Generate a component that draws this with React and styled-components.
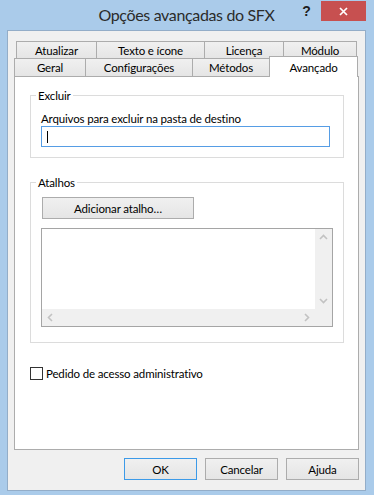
import React from 'react';
import styled, { createGlobalStyle } from 'styled-components';

const GlobalStyle = createGlobalStyle`
  html, body { margin: 0; padding: 0; }
  body {
    font-family: Lato, "Liberation Sans", sans-serif;
    font-size: 11.5px;
    letter-spacing: -0.15px;
    color: #000;
    background: #aacbea;
  }
  * { box-sizing: border-box; }
`;

const Window = styled.div`
  width: 374px;
  height: 495px;
  display: flex;
  flex-direction: column;
  padding: 0 8px 4px 7px;
  background: #aacbea;
`;

const TitleBar = styled.div`
  height: 30px;
  flex-shrink: 0;
  display: grid;
  grid-template-columns: 1fr auto 1fr;
  align-items: start;
`;

const Title = styled.div`
  grid-column: 2;
  height: 30px;
  line-height: 30px;
  font-size: 16px;
  letter-spacing: -0.35px;
  color: #2b2b2b;
  white-space: nowrap;
`;

const Controls = styled.div`
  grid-column: 3;
  justify-self: end;
  display: flex;
  padding-top: 1px;
`;

const CaptionButton = styled.div`
  width: ${p => p.$w}px;
  height: 20px;
  display: flex;
  align-items: center;
  justify-content: center;
  background: ${p => (p.$close ? '#c75050' : 'transparent')};
  color: #1f1f1f;
  font: bold 14px "Liberation Sans", sans-serif;
`;

const Client = styled.div`
  flex: 1;
  display: flex;
  flex-direction: column;
  border: 1px solid #93adc8;
  background: #f0f0f0;
  padding: 10px 6px 0 6px;
`;

const TabRow = styled.div`
  display: flex;
  align-items: flex-end;
  height: ${p => p.$h}px;
  padding-left: ${p => p.$indent || 0}px;
  flex-shrink: 0;
`;

const Tab = styled.div`
  width: ${p => p.$w}px;
  height: ${p => (p.$active ? '21px' : '100%')};
  margin-left: -1px;
  margin-bottom: ${p => (p.$active ? '-1px' : '0')};
  position: relative;
  z-index: ${p => (p.$active ? 2 : 1)};
  display: flex;
  align-items: center;
  justify-content: center;
  border: 1px solid #acacac;
  border-bottom: none;
  background: ${p => (p.$active ? '#fff' : 'linear-gradient(#f0f0f0, #e5e5e5)')};
  white-space: nowrap;
  &:first-child { margin-left: 0; }
`;

const Panel = styled.div`
  height: 374px;
  flex-shrink: 0;
  display: flex;
  flex-direction: column;
  border: 1px solid #acacac;
  background: #fff;
  padding: 11px 14px 0 15px;
`;

const Group = styled.fieldset`
  margin: ${p => p.$mt || 0}px 0 0;
  padding: ${p => p.$pt}px 10px ${p => p.$pb}px;
  border: 1px solid #dcdcdc;
  min-width: 0;
`;

const Legend = styled.legend`
  margin-left: -5px;
  padding: 0 2px;
  line-height: 15px;
`;

const FieldLabel = styled.div`
  line-height: 15px;
  height: 15px;
  white-space: nowrap;
`;

const TextBox = styled.div`
  width: 289px;
  height: 21px;
  display: flex;
  align-items: center;
  padding-left: 5px;
  border: 1px solid #569de5;
  background: #fff;
`;

const Caret = styled.span`
  width: 1px;
  height: 12px;
  background: #000;
`;

const PushButton = styled.button`
  width: ${p => p.$w}px;
  height: 22px;
  margin: 0 0 0 ${p => p.$ml || 0}px;
  padding: 0;
  border: 1px solid ${p => (p.$default ? '#3c9ae8' : '#acacac')};
  background: linear-gradient(#f0f0f0, #e5e5e5);
  font: inherit;
  letter-spacing: inherit;
  color: #000;
  white-space: nowrap;
`;

const ListBox = styled.div`
  width: 292px;
  height: 99px;
  margin-top: 9px;
  display: grid;
  grid-template-columns: 1fr 17px;
  grid-template-rows: 1fr 17px;
  border: 1px solid #a5a5a5;
  background: #f0f0f0;
`;

const ListArea = styled.div`
  background: #fff;
`;

const ScrollBar = styled.div`
  display: flex;
  flex-direction: ${p => (p.$vertical ? 'column' : 'row')};
  justify-content: space-between;
`;

const ArrowCell = styled.div`
  width: 17px;
  height: 17px;
  display: flex;
  align-items: center;
  justify-content: center;
`;

const CheckRow = styled.label`
  margin-top: 23px;
  display: flex;
  align-items: center;
  gap: 3px;
  line-height: 15px;
`;

const CheckBox = styled.span`
  width: 13px;
  height: 13px;
  border: 1px solid #333;
  background: #fff;
`;

const ButtonRow = styled.div`
  margin-top: 8px;
  display: flex;
  justify-content: flex-end;
  gap: 8px;
`;

const Chevron = ({ dir }) => {
  const rot = { up: 0, right: 90, down: 180, left: 270 }[dir];
  return (
    <svg width="9" height="9" viewBox="0 0 9 9" style={{ transform: `rotate(${rot}deg)` }}>
      <polyline points="1,6 4.5,2.5 8,6" fill="none" stroke="#c2c2c2" strokeWidth="1.6" />
    </svg>
  );
};

const topTabs = [
  { label: 'Atualizar', w: 81 },
  { label: 'Texto e ícone', w: 109 },
  { label: 'Licença', w: 80 },
  { label: 'Módulo', w: 74 },
];

const bottomTabs = [
  { label: 'Geral', w: 72 },
  { label: 'Configurações', w: 108 },
  { label: 'Métodos', w: 78 },
  { label: 'Avançado', w: 89, active: true },
];

export default function App() {
  return (
    <>
      <GlobalStyle />
      <Window>
        <TitleBar>
          <Title>Opções avançadas do SFX</Title>
          <Controls>
            <CaptionButton $w={29}>?</CaptionButton>
            <CaptionButton $w={45} $close>
              <svg width="9" height="9" viewBox="0 0 9 9">
                <path d="M1 1L8 8M8 1L1 8" stroke="#fff" strokeWidth="1.7" />
              </svg>
            </CaptionButton>
          </Controls>
        </TitleBar>

        <Client>
          <TabRow $h={17} $indent={2}>
            {topTabs.map(t => (
              <Tab key={t.label} $w={t.w}>{t.label}</Tab>
            ))}
          </TabRow>
          <TabRow $h={18}>
            {bottomTabs.map(t => (
              <Tab key={t.label} $w={t.w} $active={t.active}>{t.label}</Tab>
            ))}
          </TabRow>

          <Panel>
            <Group $pt={8} $pb={10}>
              <Legend>Excluir</Legend>
              <FieldLabel>Arquivos para excluir na pasta de destino</FieldLabel>
              <TextBox><Caret /></TextBox>
            </Group>

            <Group $mt={17} $pt={7} $pb={15}>
              <Legend>Atalhos</Legend>
              <PushButton type="button" $w={152} $ml={1}>Adicionar atalho…</PushButton>
              <ListBox>
                <ListArea />
                <ScrollBar $vertical>
                  <ArrowCell><Chevron dir="up" /></ArrowCell>
                  <ArrowCell><Chevron dir="down" /></ArrowCell>
                </ScrollBar>
                <ScrollBar>
                  <ArrowCell><Chevron dir="left" /></ArrowCell>
                  <ArrowCell><Chevron dir="right" /></ArrowCell>
                </ScrollBar>
              </ListBox>
            </Group>

            <CheckRow>
              <CheckBox />
              Pedido de acesso administrativo
            </CheckRow>
          </Panel>

          <ButtonRow>
            <PushButton type="button" $w={73} $default>OK</PushButton>
            <PushButton type="button" $w={73}>Cancelar</PushButton>
            <PushButton type="button" $w={73}>Ajuda</PushButton>
          </ButtonRow>
        </Client>
      </Window>
    </>
  );
}
